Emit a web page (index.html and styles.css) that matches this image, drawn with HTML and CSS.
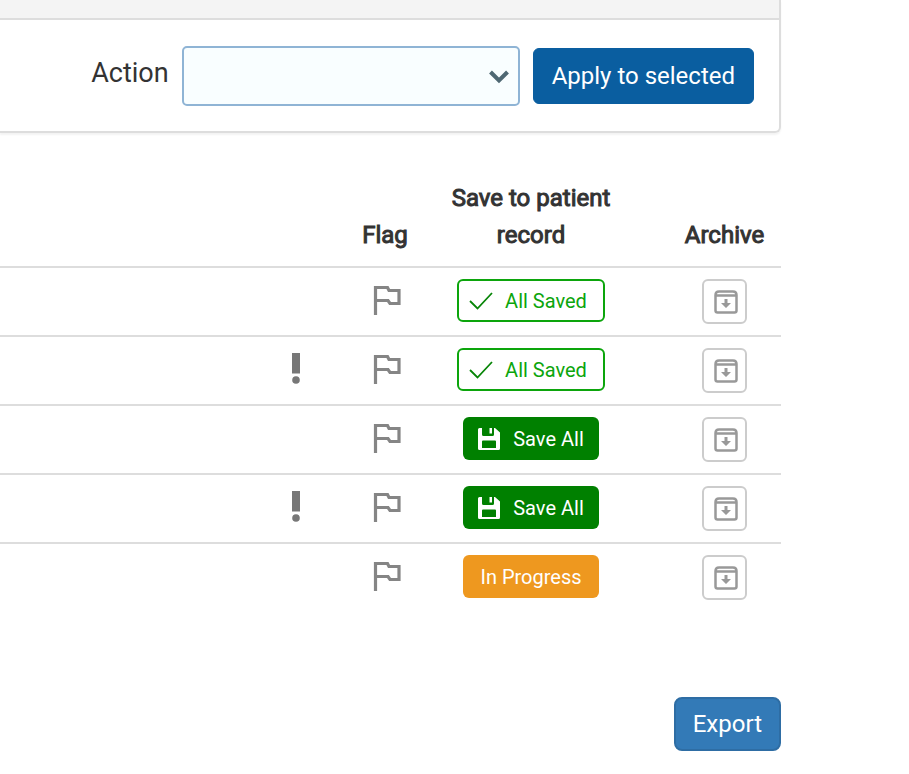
FILE: index.html
```html
<!DOCTYPE html>
<html lang="en">
<head>
<meta charset="utf-8">
<title>Patient records</title>
<link rel="stylesheet" href="styles.css">
</head>
<body>
<svg class="sprite" aria-hidden="true">
  <symbol id="flag" viewBox="-4 0 32 32"><path d="M2.500 31V3.500H14.500L16 6.500H26V19.500H17L15 16.500H2.500" fill="none" stroke="currentColor" stroke-width="3.200"/></symbol>
  <symbol id="check" viewBox="0 0 24 20"><path d="M1 10L8.500 17.500L23 2" fill="none" stroke="currentColor" stroke-width="1.800"/></symbol>
  <symbol id="disk" viewBox="0 0 22 22"><path fill="currentColor" fill-rule="evenodd" d="M1.500 0H4V6.500Q4 8 5.500 8H14.500Q16 8 16 6.500V0H17L22 4.500V20.500Q22 22 20.500 22H1.500Q0 22 0 20.500V1.500Q0 0 1.500 0ZM5 12.500Q4 12.500 4 13.500V20H18V13.500Q18 12.500 17 12.500ZM11.500 0H14V5.500H11.500Z"/></symbol>
  <symbol id="archive" viewBox="0 0 24 24"><path d="M1.500 5Q1.500 1.500 5 1.500H19Q22.500 1.500 22.500 5V20.500Q22.500 22.500 20.500 22.500H3.500Q1.500 22.500 1.500 20.500ZM2 5.500H22" fill="none" stroke="currentColor" stroke-width="2.500" stroke-linejoin="round"/><path d="M10.500 9H13.500V13H17L12 18L7 13H10.500Z" fill="currentColor"/></symbol>
  <symbol id="alert" viewBox="0 0 8 32"><path d="M0 1H8V21.500H0Z" fill="currentColor"/><circle cx="4" cy="28" r="3.800" fill="currentColor"/></symbol>
</svg>
<main class="page">
  <section class="panel">
    <div class="panel-head"></div>
    <form class="actions">
      <label for="action">Action</label>
      <div class="select-wrap">
        <select id="action"><option></option></select>
        <svg class="chevron" viewBox="0 0 20 14" aria-hidden="true"><path d="M1.500 2L10 10.500L18.500 2" fill="none" stroke="currentColor" stroke-width="4"/></svg>
      </div>
      <button type="button" class="btn apply">Apply to selected</button>
    </form>
  </section>
  <table class="records">
    <colgroup><col><col class="c-alert"><col class="c-flag"><col class="c-save"><col class="c-gap"><col class="c-archive"></colgroup>
    <thead>
      <tr><th></th><th></th><th>Flag</th><th>Save to patient record</th><th></th><th>Archive</th></tr>
    </thead>
    <tbody>
      <tr><td></td><td></td>
        <td><svg class="flag"><use href="#flag"/></svg></td>
        <td><button type="button" class="tag saved"><svg class="check"><use href="#check"/></svg>All Saved</button></td><td></td>
        <td><button type="button" class="archive" aria-label="Archive"><svg><use href="#archive"/></svg></button></td></tr>
      <tr><td></td><td><svg class="alert"><use href="#alert"/></svg></td>
        <td><svg class="flag"><use href="#flag"/></svg></td>
        <td><button type="button" class="tag saved"><svg class="check"><use href="#check"/></svg>All Saved</button></td><td></td>
        <td><button type="button" class="archive" aria-label="Archive"><svg><use href="#archive"/></svg></button></td></tr>
      <tr><td></td><td></td>
        <td><svg class="flag"><use href="#flag"/></svg></td>
        <td><button type="button" class="tag save"><svg class="disk"><use href="#disk"/></svg>Save All</button></td><td></td>
        <td><button type="button" class="archive" aria-label="Archive"><svg><use href="#archive"/></svg></button></td></tr>
      <tr><td></td><td><svg class="alert"><use href="#alert"/></svg></td>
        <td><svg class="flag"><use href="#flag"/></svg></td>
        <td><button type="button" class="tag save"><svg class="disk"><use href="#disk"/></svg>Save All</button></td><td></td>
        <td><button type="button" class="archive" aria-label="Archive"><svg><use href="#archive"/></svg></button></td></tr>
      <tr><td></td><td></td>
        <td><svg class="flag"><use href="#flag"/></svg></td>
        <td><button type="button" class="tag progress">In Progress</button></td><td></td>
        <td><button type="button" class="archive" aria-label="Archive"><svg><use href="#archive"/></svg></button></td></tr>
    </tbody>
  </table>
  <div class="footer"><button type="button" class="btn export">Export</button></div>
</main>
</body>
</html>
```
FILE: styles.css
```css
* { box-sizing: border-box; }
body {
  margin: 0;
  background: #fff;
  color: #333;
  font-family: Roboto, "Liberation Sans", sans-serif;
  font-size: 24px;
}
button, select { font: inherit; }
svg { display: block; }
.sprite { position: absolute; width: 0; height: 0; }
.page { margin-right: 128px; }

.panel {
  border: 2px solid #ddd;
  border-width: 0 2px 2px 0;
  border-radius: 0 0 6px 0;
  box-shadow: 0 2px 2px rgba(0, 0, 0, 0.05);
}
.panel-head {
  height: 20px;
  background: #f4f4f4;
  border-bottom: 2px solid #ddd;
}
.actions {
  display: flex;
  justify-content: flex-end;
  align-items: center;
  padding: 26px 25px 25px 0;
}
.actions label {
  margin-right: 13px;
  padding-bottom: 6px;
  font-size: 27px;
}
.select-wrap { position: relative; width: 338px; margin-right: 13px; }
select {
  display: block;
  width: 100%;
  height: 60px;
  appearance: none;
  background: #f9feff;
  border: 2px solid #8fb4d5;
  border-radius: 5px;
}
.chevron {
  position: absolute;
  right: 11px;
  top: 24px;
  width: 20px;
  height: 14px;
  color: #4f6873;
}
.btn { color: #fff; border-radius: 8px; padding: 0 18px; }
.apply {
  height: 56px;
  background: #0a5ea0;
  border: 1px solid #0a5ea0;
  border-radius: 6px;
}

.records {
  width: 100%;
  margin-top: 43px;
  table-layout: fixed;
  border-collapse: separate;
  border-spacing: 0;
}
.c-alert { width: 94px; }
.c-flag { width: 84px; }
.c-save { width: 208px; }
.c-gap { width: 33px; }
.c-archive { width: 113px; }
th {
  padding: 4px 16px 12px;
  font-weight: 400;
  -webkit-text-stroke: 1px currentColor;
  line-height: 37px;
  vertical-align: bottom;
}
td {
  height: 69px;
  padding: 11px 0;
  border-top: 2px solid #ddd;
  vertical-align: top;
}
td > * { margin: 0 auto; }
.flag { width: 32px; height: 32px; margin-top: 5px; color: #858585; }
.alert { width: 8px; height: 32px; margin-top: 4px; color: #777; }
.tag {
  display: flex;
  align-items: center;
  justify-content: center;
  height: 43px;
  padding: 0 15px;
  border: 0;
  border-radius: 6px;
  color: #fff;
  font-size: 20px;
}
.saved {
  padding: 0 16px 0 10px;
  background: #fff;
  border: 2px solid #0ca50c;
  color: #0ca50c;
}
.check { width: 24px; height: 20px; margin-right: 12px; color: #078507; }
.save { background: #008000; }
.disk { width: 22px; height: 22px; margin-right: 13px; }
.progress { padding: 0 17px; background: #ee981f; }
.archive {
  display: flex;
  align-items: center;
  justify-content: center;
  width: 45px;
  height: 45px;
  padding: 0 0 0 2px;
  background: #fff;
  border: 2px solid #ccc;
  border-radius: 6px;
  color: #999;
}
.archive svg { width: 24px; height: 24px; }

.footer { display: flex; justify-content: flex-end; margin-top: 86px; }
.export {
  height: 54px;
  padding: 0 17px;
  background: #337ab7;
  border: 2px solid #2e6da4;
}
```
